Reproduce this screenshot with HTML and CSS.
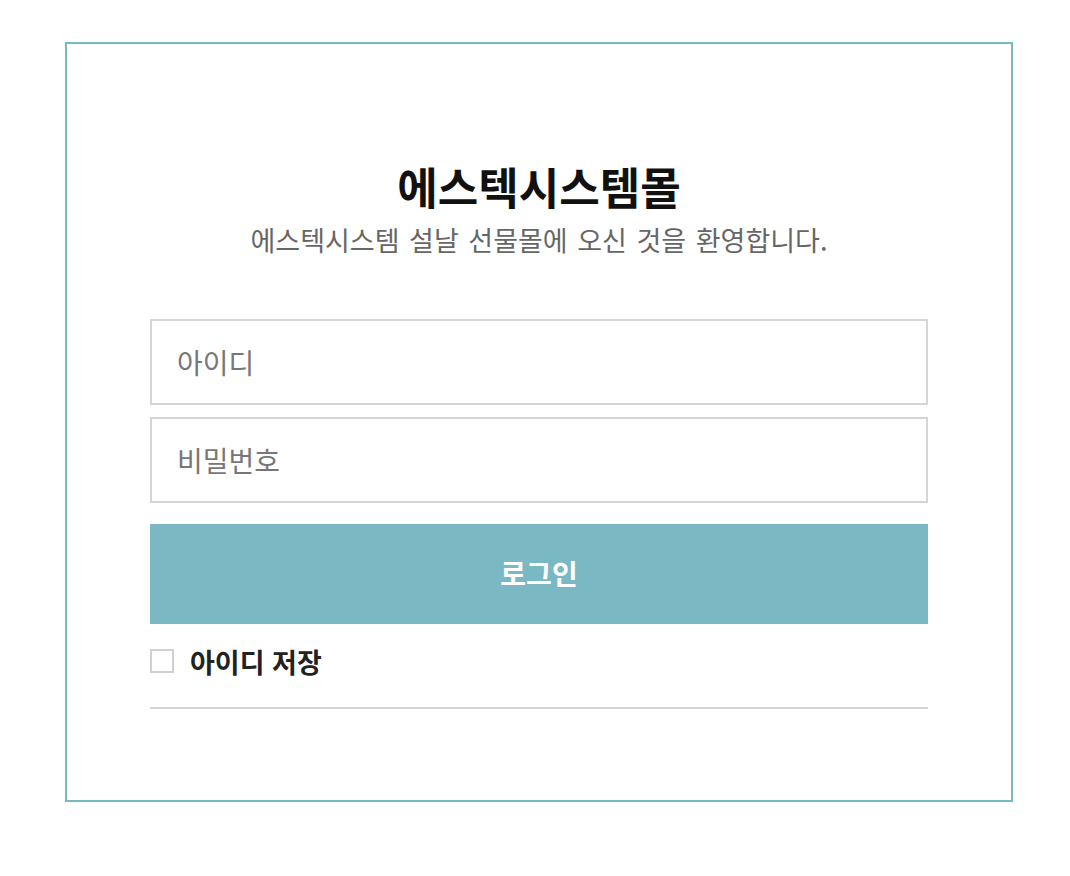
FILE: index.html
```html
<!DOCTYPE html>
<html lang="ko">
<head>
    <meta charset="UTF-8">
    <meta name="viewport" content="width=device-width, initial-scale=1.0">
    <title>에스텍시스템몰 로그인</title>
    <link rel="stylesheet" href="styles.css">
</head>
<body>
    <div class="login-box">
        <div class="login-head">
            <h1>에스텍시스템몰</h1>
            <p>에스텍시스템 설날 선물몰에 오신 것을 환영합니다.</p>
        </div>

        <form class="login-form">
            <input type="text" class="field" placeholder="아이디">
            <input type="password" class="field" placeholder="비밀번호">
            <button type="button" class="login-btn">로그인</button>

            <label class="save-id">
                <span class="check"></span>
                <span>아이디 저장</span>
            </label>
        </form>

        <hr class="divider">
    </div>
</body>
</html>
```

FILE: styles.css
```css
body {
  margin: 0;
  padding: 0;
  font-family: "Noto Sans CJK KR", "Noto Sans", sans-serif;
  background: #fff;
}

/* Outer box with teal border */
.login-box {
  box-sizing: border-box;
  width: 948px;
  height: 760px;
  margin: 42px 0 0 65px;
  border: 2px solid #7ab9c4;
  padding: 0 83px;
}

.login-head {
  text-align: center;
  padding-top: 112px;
}
.login-head h1 {
  margin: 0;
  font-size: 44px;
  line-height: 60px;
  font-weight: 700;
  color: #111;
}
.login-head p {
  margin: 0;
  font-size: 27px;
  line-height: 48px;
  color: #666;
  word-spacing: 2px;
}

.login-form {
  display: flex;
  flex-direction: column;
  margin-top: 55px;
}

.field {
  box-sizing: border-box;
  height: 86px;
  border: 2px solid #d5d5d5;
  padding: 0 25px;
  font-family: inherit;
  font-size: 28px;
  color: #333;
  outline: none;
  margin-bottom: 12px;
}
.field::placeholder {
  color: #777;
}

.login-btn {
  height: 100px;
  margin-top: 9px;
  border: none;
  background: #7ab9c4;
  color: #fff;
  font-family: inherit;
  font-size: 28px;
  font-weight: 700;
  padding-bottom: 4px;
}

.save-id {
  display: flex;
  align-items: center;
  gap: 16px;
  height: 74px;
  font-size: 27px;
  font-weight: 700;
  color: #222;
}
.check {
  box-sizing: border-box;
  width: 24px;
  height: 24px;
  border: 2px solid #d0d0d0;
}

.divider {
  margin: 9px 0 0;
  border: none;
  border-top: 2px solid #d5d5d5;
}
```
